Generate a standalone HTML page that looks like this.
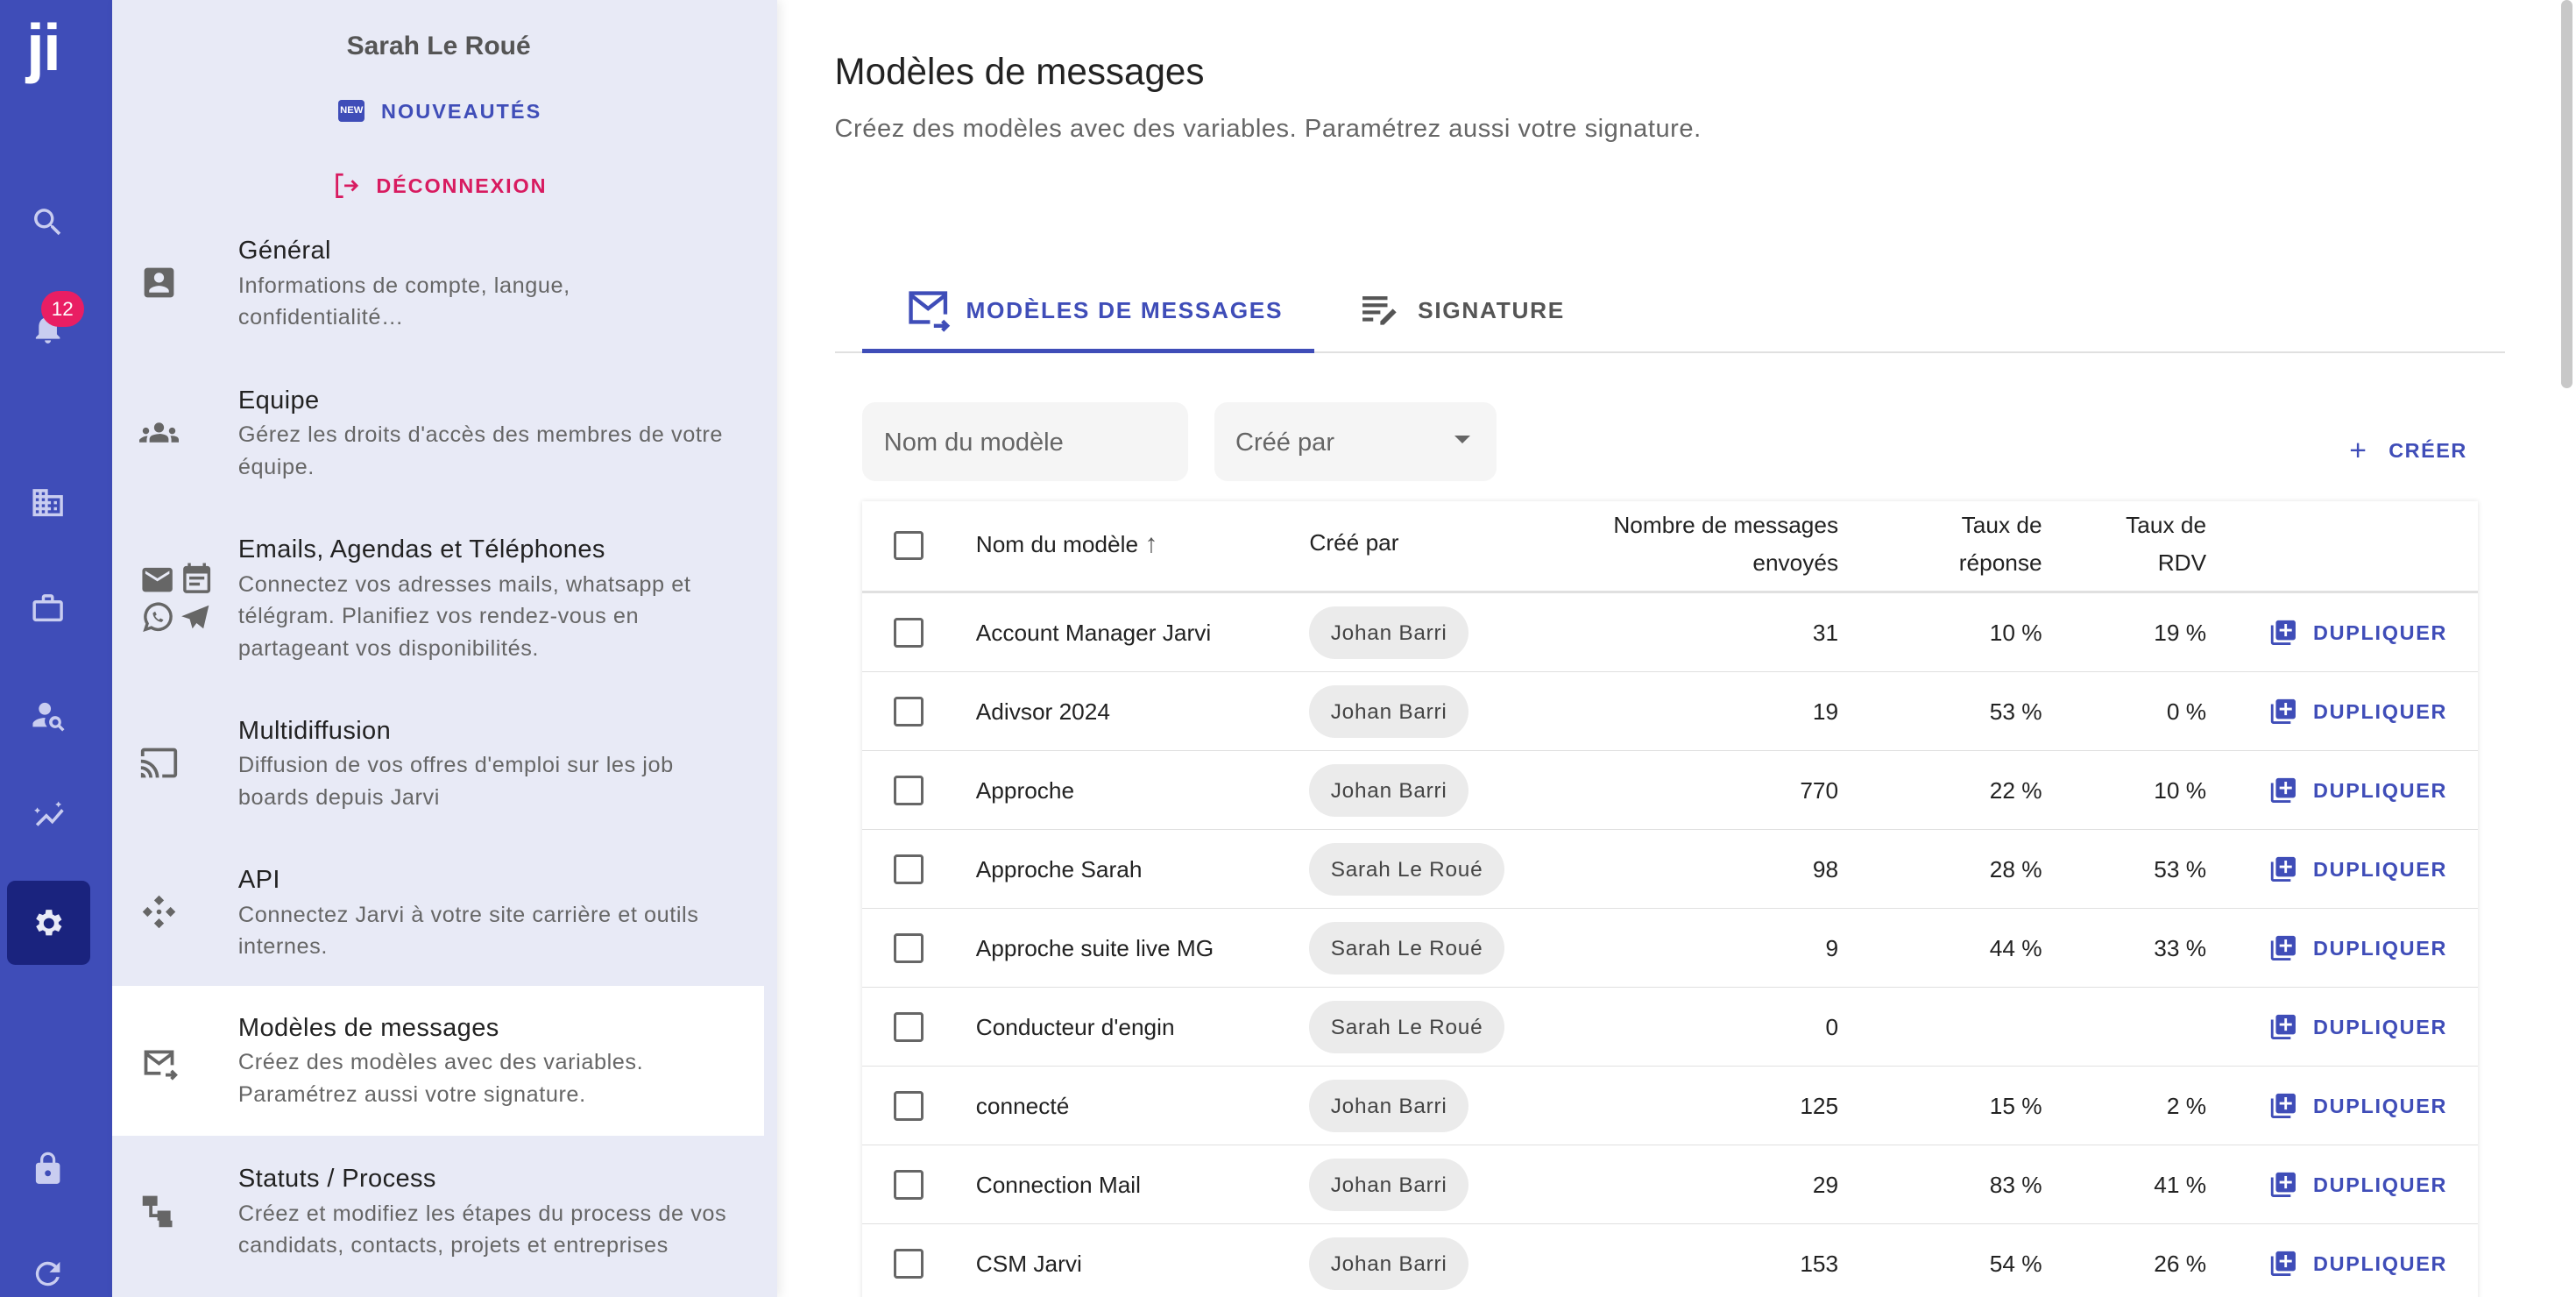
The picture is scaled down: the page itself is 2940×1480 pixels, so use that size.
<!DOCTYPE html>
<html><head><meta charset="utf-8"><style>
*{box-sizing:border-box;margin:0;padding:0}
html,body{width:2940px;height:1480px;overflow:hidden;background:#fff}
#w{zoom:1.875;width:1568px;height:790px;position:relative;font-family:"Liberation Sans",sans-serif;color:#222}
.a{position:absolute}
#rail{left:0;top:0;width:68px;height:790px;background:#3f4db8}
.ri{position:absolute;left:18px;width:22px;height:22px;fill:#c9cdf0}
#panel{left:68px;top:0;width:405px;height:790px;background:#e8eaf6;box-shadow:2px 0 6px rgba(0,0,0,.08)}
.it{position:absolute;left:0;width:397px}
.it .t{position:absolute;left:77px;font-size:15.5px;color:#222;letter-spacing:.2px}
.it .d{position:absolute;left:77px;font-size:13.5px;color:#666;line-height:19.5px;width:302px;letter-spacing:.3px}
.it svg{position:absolute;left:17px;width:24px;height:24px;fill:#666}
.cb{position:absolute;left:19px;width:18px;height:18px;border:2px solid #666;border-radius:2px}
.row{position:absolute;left:0;width:983px;height:48px;border-bottom:1px solid #e0e0e0;font-size:14px}
.row span{position:absolute;top:16px}
.chip{position:absolute;left:272px;top:8px;height:32px;border-radius:16px;background:#ebebeb;color:#444;font-size:13px;padding:9px 13px;letter-spacing:.4px}
.n{text-align:right}
.dup{position:absolute;left:856px;top:15px;width:18px;height:18px}
.dt{position:absolute;left:883px;top:17px;color:#3f4db8;font-weight:bold;font-size:12.5px;letter-spacing:.9px}
</style></head><body><div id="w">
<div id="rail" class="a">
<div class="a" style="left:16px;top:6px;color:#fff;font-weight:bold;font-size:40px;letter-spacing:-1px">ji</div>
<svg class="ri" style="top:124px" viewBox="0 0 24 24"><path d="M15.5 14h-.8l-.3-.3A6.5 6.5 0 1 0 9.5 16c1.6 0 3.1-.6 4.2-1.6l.3.3v.8l5 5 1.5-1.5-5-5zm-6 0C7 14 5 12 5 9.5S7 5 9.5 5 14 7 14 9.5 12 14 9.5 14z"/></svg>
<svg class="ri" style="top:189px" viewBox="0 0 24 24"><path d="M12 22c1.1 0 2-.9 2-2h-4c0 1.1.9 2 2 2zm6-6v-5c0-3.1-1.6-5.6-4.5-6.3V4c0-.8-.7-1.5-1.5-1.5s-1.5.7-1.5 1.5v.7C7.6 5.4 6 7.9 6 11v5l-2 2v1h16v-1l-2-2z"/></svg>
<div class="a" style="left:25px;top:177px;width:26px;height:22px;border-radius:11px;background:#e91e63;color:#fff;font-size:12px;text-align:center;line-height:22px">12</div>
<svg class="ri" style="top:295px" viewBox="0 0 24 24"><path d="M12 7V3H2v18h20V7H12zM6 19H4v-2h2v2zm0-4H4v-2h2v2zm0-4H4V9h2v2zm0-4H4V5h2v2zm4 12H8v-2h2v2zm0-4H8v-2h2v2zm0-4H8V9h2v2zm0-4H8V5h2v2zm10 12h-8v-2h2v-2h-2v-2h2v-2h-2V9h8v10zm-2-8h-2v2h2v-2zm0 4h-2v2h2v-2z"/></svg>
<svg class="ri" style="top:359px" viewBox="0 0 24 24"><path d="M20 7h-4V5c0-1.1-.9-2-2-2h-4c-1.1 0-2 .9-2 2v2H4c-1.1 0-2 .9-2 2v10c0 1.1.9 2 2 2h16c1.1 0 2-.9 2-2V9c0-1.1-.9-2-2-2zM10 5h4v2h-4V5zm10 14H4V9h16v10z"/></svg>
<svg class="ri" style="top:424px" viewBox="0 0 24 24"><circle cx="10" cy="8" r="4"/><path d="M10.3 14H10c-4 0-8 2-8 4v2h9.5a6 6 0 0 1-1.2-6zM20.3 18.9a4 4 0 1 0-1.4 1.4L21.6 23 23 21.6l-2.7-2.7zM17 19a2 2 0 1 1 0-4 2 2 0 0 1 0 4z"/></svg>
<svg class="ri" style="top:486px" viewBox="0 0 24 24"><path d="M21 7l-6 7-4-4-7 7 1.5 1.5L11 13l4 4 7.5-8.5z M5 6l.7 1.3L7 8l-1.3.7L5 10l-.7-1.3L3 8l1.3-.7z M19 2l.7 1.3L21 4l-1.3.7L19 6l-.7-1.3L17 4l1.3-.7z"/></svg>
<div class="a" style="left:4px;top:536px;width:51px;height:51px;border-radius:5px;background:#1a237e"></div>
<svg class="ri" style="top:551px;fill:#e8eaf6" viewBox="0 0 24 24"><path d="M19.1 12.9a7 7 0 0 0 0-1.8l2.1-1.6-2-3.5-2.5 1a7 7 0 0 0-1.6-.9L14.7 3h-4l-.4 2.6c-.6.2-1.1.5-1.6.9l-2.5-1-2 3.5 2.1 1.6a7 7 0 0 0 0 1.8l-2.1 1.6 2 3.5 2.5-1c.5.4 1 .7 1.6.9l.4 2.6h4l.4-2.6c.6-.2 1.1-.5 1.6-.9l2.5 1 2-3.5-2.1-1.6zM12.7 15.5a3.5 3.5 0 1 1 0-7 3.5 3.5 0 0 1 0 7z"/></svg>
<svg class="ri" style="top:700px" viewBox="0 0 24 24"><path d="M18 8h-1V6A5 5 0 0 0 7 6v2H6c-1.1 0-2 .9-2 2v10c0 1.1.9 2 2 2h12c1.1 0 2-.9 2-2V10c0-1.1-.9-2-2-2zm-6 9a2 2 0 1 1 0-4 2 2 0 0 1 0 4zm3.1-9H8.9V6a3.1 3.1 0 0 1 6.2 0v2z"/></svg>
<svg class="ri" style="top:764px" viewBox="0 0 24 24"><path d="M17.7 6.3A8 8 0 1 0 19.7 14h-2.1A6 6 0 1 1 12 6c1.7 0 3.1.7 4.2 1.8L13 11h7V4l-2.3 2.3z"/></svg>
</div>
<div id="panel" class="a">
<div class="a" style="left:0;width:398px;top:19px;text-align:center;font-weight:bold;font-size:16px;color:#555">Sarah Le Roué</div>
<div class="a" style="left:138px;top:61px;width:16px;height:13px;background:#3f4db8;border-radius:2px;color:#fff;font-size:6px;font-weight:bold;text-align:center;line-height:13px">NEW</div>
<div class="a" style="left:164px;top:61px;font-size:12.5px;font-weight:bold;color:#3f4db8;letter-spacing:1.1px">NOUVEAUTÉS</div>
<svg class="a" style="left:134px;top:104px;width:18px;height:18px" viewBox="0 0 24 24" fill="none" stroke="#d81b60" stroke-width="2"><path d="M9 3H4v18h5M10 12h10M16 8l4 4-4 4"/></svg>
<div class="a" style="left:161px;top:106px;font-size:12.5px;font-weight:bold;color:#d81b60;letter-spacing:1px">DÉCONNEXION</div>

<div class="it" style="top:140px;height:80px"><div class="t" style="top:4px">Général</div><div class="d" style="top:24px">Informations de compte, langue, confidentialité…</div>
<svg style="top:20px" viewBox="0 0 24 24"><path d="M3 5v14c0 1.1.9 2 2 2h14c1.1 0 2-.9 2-2V5c0-1.1-.9-2-2-2H5c-1.1 0-2 .9-2 2zm12 4a3 3 0 1 1-6 0 3 3 0 0 1 6 0zm-9 8c0-2 4-3.1 6-3.1s6 1.1 6 3.1v1H6v-1z"/></svg></div>
<div class="it" style="top:231px;height:80px"><div class="t" style="top:4px">Equipe</div><div class="d" style="top:24px">Gérez les droits d'accès des membres de votre équipe.</div>
<svg style="top:20px" viewBox="0 0 24 24"><path d="M12 12.8c1.6 0 3.1.4 4.3.9.9.4 1.5 1.4 1.5 2.4V18H6.2v-1.8c0-1 .6-2 1.5-2.4 1.2-.5 2.7-.9 4.3-.9zM4 13a2 2 0 1 0 0-4 2 2 0 0 0 0 4zm1.1 1.1A7 7 0 0 0 0 16.4V18h4.5v-1.6c0-.8.2-1.6.6-2.3zM20 13a2 2 0 1 0 0-4 2 2 0 0 0 0 4zm4 3.4c0-.8-.5-1.5-1.2-1.8a7 7 0 0 0-3.9-.5c.4.7.6 1.5.6 2.3V18H24v-1.6zM12 6a3 3 0 1 1 0 6 3 3 0 0 1 0-6z"/></svg></div>
<div class="it" style="top:322px;height:90px"><div class="t" style="top:4px">Emails, Agendas et Téléphones</div><div class="d" style="top:24px">Connectez vos adresses mails, whatsapp et télégram. Planifiez vos rendez-vous en partageant vos disponibilités.</div>
<svg style="top:20px;left:17px;width:22px;height:22px" viewBox="0 0 24 24"><path d="M20 4H4a2 2 0 0 0-2 2v12a2 2 0 0 0 2 2h16a2 2 0 0 0 2-2V6a2 2 0 0 0-2-2zm0 4l-8 5-8-5V6l8 5 8-5v2z"/></svg>
<svg style="top:19px;left:41px;width:22px;height:22px" viewBox="0 0 24 24"><path d="M19 4h-1V2h-2v2H8V2H6v2H5a2 2 0 0 0-2 2v14a2 2 0 0 0 2 2h14a2 2 0 0 0 2-2V6a2 2 0 0 0-2-2zm0 16H5V9h14v11zM7 11h10v2H7zm0 4h7v2H7z"/></svg>
<svg style="top:43px;left:17px;width:22px;height:22px;fill:none" viewBox="0 0 24 24" stroke="#666" stroke-width="2"><path d="M4 20l1.3-4A8.5 8.5 0 1 1 8 18.7z"/><path d="M9 9c0 3 3 6 6 6l1-1.5-2-1-1 1c-1-.5-2-1.5-2.5-2.5l1-1-1-2z" fill="#666" stroke="none"/></svg>
<svg style="top:44px;left:41px;width:20px;height:20px" viewBox="0 0 24 24"><path d="M22 3L2 11l6 2 2 7 3-4 5 4z"/></svg></div>
<div class="it" style="top:432px;height:80px"><div class="t" style="top:4px">Multidiffusion</div><div class="d" style="top:24px">Diffusion de vos offres d'emploi sur les job boards depuis Jarvi</div>
<svg style="top:20px" viewBox="0 0 24 24"><path d="M21 3H3c-1.1 0-2 .9-2 2v3h2V5h18v14h-7v2h7c1.1 0 2-.9 2-2V5c0-1.1-.9-2-2-2zM1 18v3h3c0-1.7-1.3-3-3-3zm0-4v2a5 5 0 0 1 5 5h2c0-3.9-3.1-7-7-7zm0-4v2a9 9 0 0 1 9 9h2c0-6.1-4.9-11-11-11z"/></svg></div>
<div class="it" style="top:523px;height:80px"><div class="t" style="top:4px">API</div><div class="d" style="top:24px">Connectez Jarvi à votre site carrière et outils internes.</div>
<svg style="top:20px" viewBox="0 0 24 24"><path d="M12 2l3 3-3 3-3-3zM12 16l3 3-3 3-3-3zM5 9l3 3-3 3-3-3zM19 9l3 3-3 3-3-3zM12 10.5a1.5 1.5 0 1 1 0 3 1.5 1.5 0 0 1 0-3z"/></svg></div>
<div class="it" style="top:600px;height:91px;background:#fff"><div class="t" style="top:17px">Modèles de messages</div><div class="d" style="top:37px">Créez des modèles avec des variables. Paramétrez aussi votre signature.</div>
<svg style="top:35px;fill:none" viewBox="0 0 24 24" stroke="#666" stroke-width="2"><path d="M13 18H4V5h16v8M4 6l8 6 8-6M16 19h6M19.5 16.5l2.5 2.5-2.5 2.5"/></svg></div>
<div class="it" style="top:705px;height:80px"><div class="t" style="top:4px">Statuts / Process</div><div class="d" style="top:24px">Créez et modifiez les étapes du process de vos candidats, contacts, projets et entreprises</div>
<svg style="top:20px" viewBox="0 0 24 24"><path d="M2 3h9v6H8v5h3v-2h8v6h-8v-2H6V9H2zM12 18h8v4h-8z"/></svg></div>
</div>

<div class="a" style="left:508px;top:31px;font-size:22.5px;color:#222">Modèles de messages</div>
<div class="a" style="left:508px;top:70px;font-size:15.5px;color:#666;letter-spacing:.3px">Créez des modèles avec des variables. Paramétrez aussi votre signature.</div>

<svg class="a" style="left:551px;top:175px;width:28px;height:28px" viewBox="0 0 24 24" fill="none" stroke="#3f4db8" stroke-width="2"><path d="M13 18H3V3h18v11M3 4l9 7 9-7M15 20h7M19.5 17.5l2.5 2.5-2.5 2.5"/></svg>
<div class="a" style="left:588px;top:181px;font-size:14px;font-weight:bold;color:#3f4db8;letter-spacing:.9px">MODÈLES DE MESSAGES</div>
<svg class="a" style="left:827px;top:176px;width:26px;height:26px" viewBox="0 0 24 24" fill="#555"><path d="M2 4h14v2H2zM2 8h14v2H2zM2 12h10v2H2zM2 16h6v2H2zM19 11l2 2-7 7h-2v-2z"/></svg>
<div class="a" style="left:863px;top:181px;font-size:14px;font-weight:bold;color:#555;letter-spacing:.9px">SIGNATURE</div>
<div class="a" style="left:508px;top:214px;width:1017px;height:1px;background:#e0e0e0"></div>
<div class="a" style="left:525px;top:212px;width:275px;height:3px;background:#3f4db8"></div>

<div class="a" style="left:525px;top:245px;width:198px;height:48px;background:#f5f5f5;border-radius:8px;font-size:15.5px;color:#666;padding:16px 13px">Nom du modèle</div>
<div class="a" style="left:739px;top:245px;width:172px;height:48px;background:#f5f5f5;border-radius:8px;font-size:15.5px;color:#666;padding:16px 13px">Créé par<span style="position:absolute;right:16px;top:20px;border:5px solid transparent;border-top:5px solid #666"></span></div>
<div class="a" style="left:1430px;top:264px;font-size:18px;color:#3f4db8">+</div>
<div class="a" style="left:1454px;top:267px;font-size:12.5px;font-weight:bold;color:#3f4db8;letter-spacing:.8px">CRÉER</div>

<div class="a" style="left:525px;top:305px;width:983px;height:500px;box-shadow:0 0 3px rgba(0,0,0,.12);background:#fff">
<div class="row" style="top:0;height:56px;border-bottom:2px solid #e0e0e0;font-size:14px">
<div class="cb" style="top:18px"></div>
<span style="left:69px;top:17px">Nom du modèle <span style="position:static;font-size:16px;color:#555">↑</span></span>
<span style="left:272px;top:17px">Créé par</span>
<span class="n" style="right:389px;top:3px;line-height:23px">Nombre de messages<br>envoyés</span>
<span class="n" style="right:265px;top:3px;line-height:23px">Taux de<br>réponse</span>
<span class="n" style="right:165px;top:3px;line-height:23px">Taux de<br>RDV</span>
</div>
<div id="rows"></div>
</div>
<div class="a" style="left:1559px;top:0;width:7px;height:236px;border-radius:4px;background:#c8c8c8"></div>
</div>
<script>
var d=[["Account Manager Jarvi","Johan Barri","31","10 %","19 %"],["Adivsor 2024","Johan Barri","19","53 %","0 %"],["Approche","Johan Barri","770","22 %","10 %"],["Approche Sarah","Sarah Le Roué","98","28 %","53 %"],["Approche suite live MG","Sarah Le Roué","9","44 %","33 %"],["Conducteur d'engin","Sarah Le Roué","0","",""],["connecté","Johan Barri","125","15 %","2 %"],["Connection Mail","Johan Barri","29","83 %","41 %"],["CSM Jarvi","Johan Barri","153","54 %","26 %"]];
var h="";d.forEach(function(r,i){h+='<div class="row" style="top:'+(56+i*48)+'px"><div class="cb" style="top:15px"></div><span style="left:69px">'+r[0]+'</span><div class="chip">'+r[1]+'</div><span class="n" style="right:389px">'+r[2]+'</span><span class="n" style="right:265px">'+r[3]+'</span><span class="n" style="right:165px">'+r[4]+'</span><svg class="dup" viewBox="0 0 24 24" fill="#3f4db8"><path d="M4 6H2v14c0 1.1.9 2 2 2h14v-2H4V6zm16-4H8c-1.1 0-2 .9-2 2v12c0 1.1.9 2 2 2h12c1.1 0 2-.9 2-2V4c0-1.1-.9-2-2-2zm-1 9h-4v4h-2v-4H9V9h4V5h2v4h4v2z"/></svg><div class="dt">DUPLIQUER</div></div>'});
document.getElementById("rows").innerHTML=h;
</script>
</body></html>
